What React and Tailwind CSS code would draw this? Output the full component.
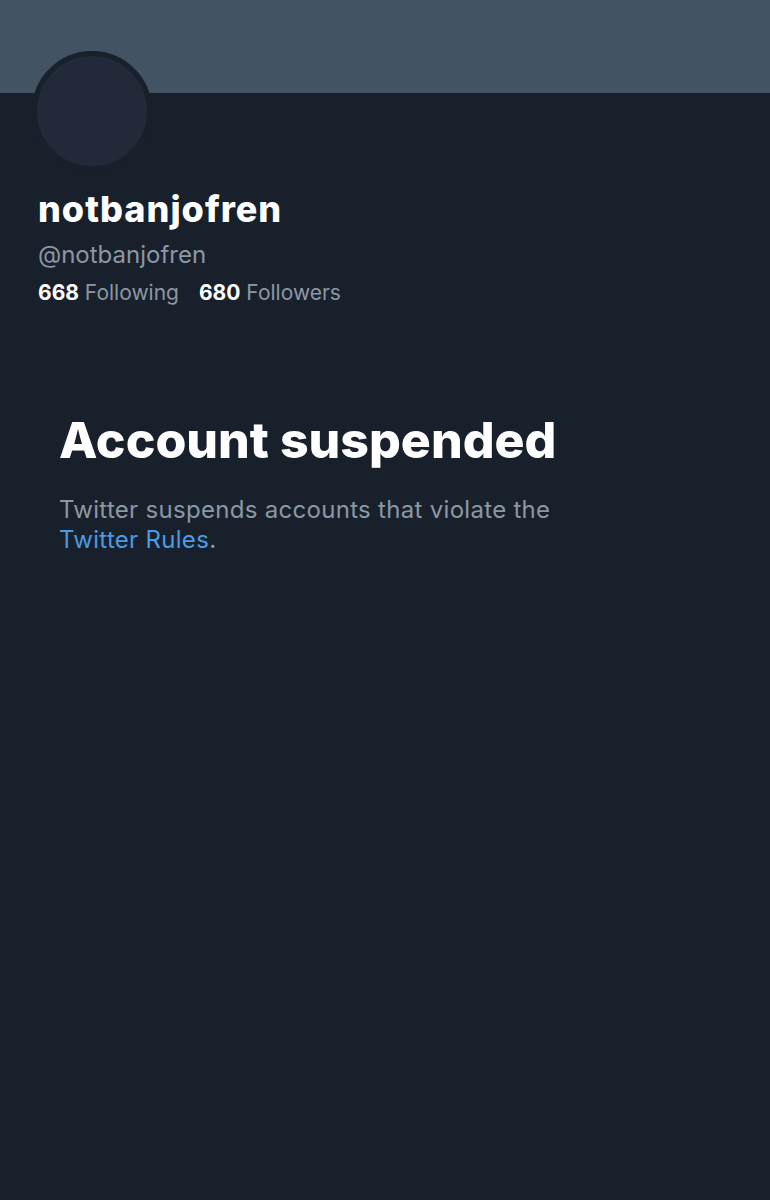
import React from "react";

const App = () => {
  return (
    <div className="min-h-[1200px] w-full bg-[#18202b] font-['Inter',sans-serif]">
      <div className="h-[93px] w-full bg-[#425364]" />

      <div className="px-[32px]">
        <div className="-mt-[42px] h-[120px] w-[120px] rounded-full border-[5px] border-[#18202b] bg-[#202a38]" />

        <div className="px-[6px]">
          <h1 className="mt-[16px] text-[36px] font-extrabold leading-[44px] tracking-[1px] text-white">
            notbanjofren
          </h1>
          <p className="mt-[9px] text-[24px] leading-[30px] text-[#8b98a5]">@notbanjofren</p>
          <div className="mt-[9px] flex gap-[20px] text-[21px] leading-[28px]">
            <span>
              <span className="font-bold text-white">668</span>{" "}
              <span className="text-[#8b98a5]">Following</span>
            </span>
            <span>
              <span className="font-bold text-white">680</span>{" "}
              <span className="text-[#8b98a5]">Followers</span>
            </span>
          </div>
        </div>
      </div>

      <section className="mt-[103px] px-[59px]">
        <h2 className="text-[50px] font-extrabold leading-[60px] text-white">
          Account suspended
        </h2>
        <p className="mt-[25px] max-w-[540px] text-[24px] leading-[30px] tracking-[0.3px] text-[#8b98a5]">
          Twitter suspends accounts that violate the{" "}
          <span className="text-[#4a9be6]">Twitter Rules</span>.
        </p>
      </section>
    </div>
  );
};

export default App;
